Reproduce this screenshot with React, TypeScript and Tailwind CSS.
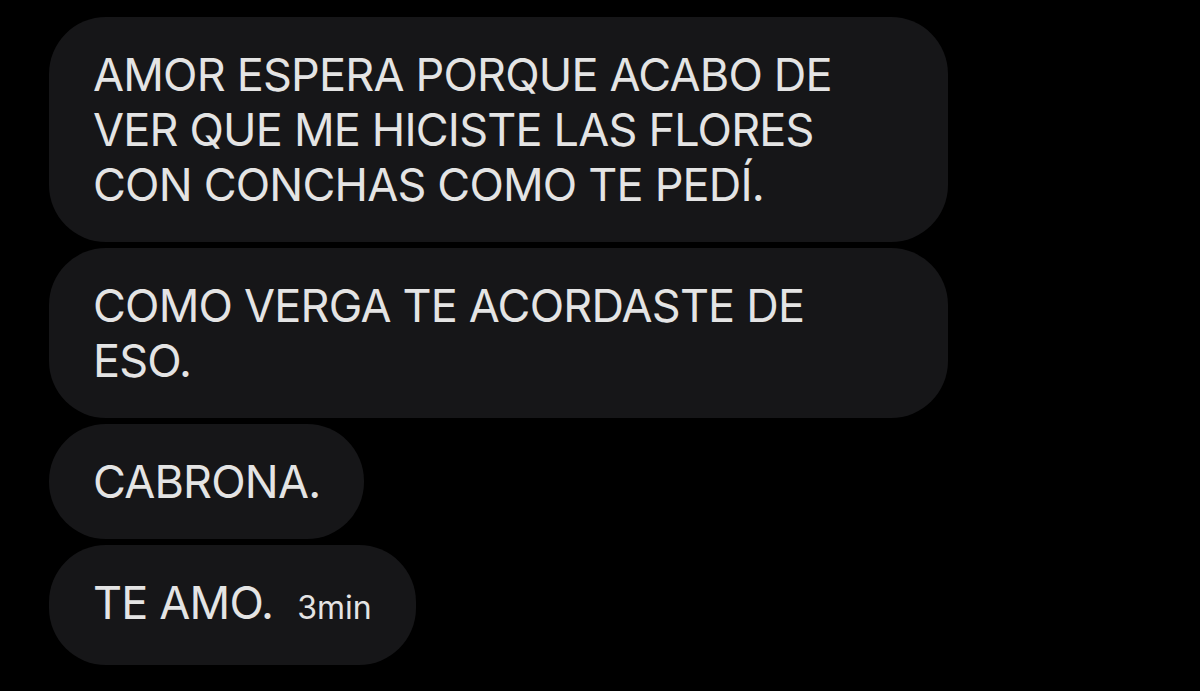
export default function App() {
  const bubble =
    "bg-[#161618] text-[#e4e4e4] rounded-[57px] pl-[44px] pr-[44px] py-[30px] text-[45px] leading-[55px] tracking-[-0.8px] font-normal";
  return (
    <div
      className="w-[1200px] h-[691px] bg-black overflow-hidden pl-[49px] pt-[17px] flex flex-col items-start gap-[6px]"
      style={{ fontFamily: "Inter, 'Liberation Sans', sans-serif" }}
    >
      <div className={`${bubble} w-[899px]`}>
        AMOR ESPERA PORQUE ACABO DE
        <br />
        VER QUE ME HICISTE LAS FLORES
        <br />
        CON CONCHAS COMO TE PEDÍ.
      </div>
      <div className={`${bubble} w-[899px]`}>
        COMO VERGA TE ACORDASTE DE
        <br />
        ESO.
      </div>
      <div className={bubble}>CABRONA.</div>
      <div className={`${bubble} flex items-baseline`}>
        <span>TE AMO.</span>
        <span className="ml-[24px] text-[32px] tracking-normal">3min</span>
      </div>
    </div>
  );
}
